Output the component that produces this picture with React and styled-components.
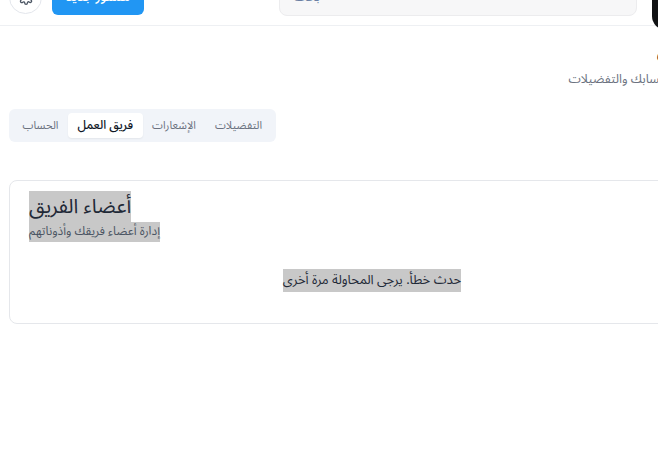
import React from "react";
import styled, { createGlobalStyle } from "styled-components";

const GlobalStyle = createGlobalStyle`
  html, body {
    margin: 0;
    padding: 0;
    background: #ffffff;
    overflow: hidden;
  }
  body {
    font-family: "Noto Sans Arabic", "Noto Sans", sans-serif;
    color: #111827;
  }
  * { box-sizing: border-box; }
`;

const Page = styled.div`
  width: 744px;
  padding: 0 9px;
`;

const Header = styled.header`
  height: 57px;
  margin: -31px -9px 0;
  padding: 0 9px;
  display: flex;
  align-items: center;
  border-bottom: 1px solid #eef0f3;
`;

const HeaderStart = styled.div`
  display: flex;
  align-items: center;
  gap: 10px;
`;

const IconButton = styled.button`
  width: 33px;
  height: 33px;
  border-radius: 50%;
  border: 1px solid #e3e6ec;
  background: #fff;
  display: flex;
  align-items: center;
  justify-content: center;
  padding: 0;
  color: #4b5563;
`;

const PrimaryButton = styled.button`
  width: 92px;
  height: 36px;
  border: none;
  border-radius: 6px;
  background: #2196f3;
  color: #ffffff;
  font-family: "Noto Sans Arabic", sans-serif;
  font-size: 13px;
  font-weight: 500;
`;

const Search = styled.div`
  margin-left: auto;
  width: 358px;
  height: 37px;
  border: 1px solid #ececee;
  border-radius: 8px;
  background: #f7f7f8;
  display: flex;
  align-items: center;
  justify-content: flex-end;
  padding: 0 14px;
  direction: rtl;
  color: #6b7fa3;
  font-size: 13px;
`;

const DarkBadge = styled.div`
  margin-left: 15px;
  width: 83px;
  height: 66px;
  border-radius: 14px;
  background: #111214;
`;

const Main = styled.main`
  padding-top: 16px;
`;

const PageTitle = styled.h1`
  margin: 0;
  font-size: 19px;
  font-weight: 700;
  line-height: 28px;
  text-align: right;
  direction: rtl;
  color: #111827;
`;

const PageSubtitle = styled.p`
  margin: 0;
  font-size: 12.5px;
  line-height: 19px;
  text-align: right;
  direction: rtl;
  color: #6b7280;
`;

const TabList = styled.div`
  margin-top: 20px;
  display: inline-flex;
  align-items: center;
  padding: 4px;
  border-radius: 6px;
  background: #f1f4f9;
`;

const Tab = styled.div`
  height: 25px;
  padding: 0 9.5px;
  display: flex;
  align-items: center;
  border-radius: 4px;
  font-size: ${(p) => (p.$active ? "12px" : "11px")};
  font-weight: ${(p) => (p.$active ? 500 : 400)};
  direction: rtl;
  color: ${(p) => (p.$active ? "#111827" : "#6b7280")};
  background: ${(p) => (p.$active ? "#ffffff" : "transparent")};
  box-shadow: ${(p) => (p.$active ? "0 1px 2px rgba(0,0,0,0.06)" : "none")};
`;

const Card = styled.section`
  margin-top: 38px;
  border: 1px solid #e5e7eb;
  border-radius: 8px;
  padding: 10px 19px 31px;
`;

const Selected = styled.span`
  display: inline-block;
  background: #c8c8c8;
  direction: rtl;
`;

const CardTitle = styled(Selected)`
  font-size: 20px;
  line-height: 32px;
  font-weight: 400;
  color: #1f2937;
`;

const CardSubtitle = styled(Selected)`
  margin-top: -1px;
  font-size: 12px;
  line-height: 20px;
  color: #4b5563;
`;

const Block = styled.div`
  line-height: 0;
`;

const ErrorRow = styled.div`
  margin-top: 27px;
  text-align: center;
  line-height: 0;
`;

const ErrorText = styled(Selected)`
  font-size: 13px;
  line-height: 23px;
  color: #1f2937;
`;

function GearIcon() {
  return (
    <svg width="16" height="16" viewBox="0 0 24 24" fill="none" stroke="currentColor" strokeWidth="2" strokeLinecap="round" strokeLinejoin="round">
      <circle cx="12" cy="12" r="3" />
      <path d="M19.4 15a1.65 1.65 0 0 0 .33 1.82l.06.06a2 2 0 1 1-2.83 2.83l-.06-.06a1.65 1.65 0 0 0-1.82-.33 1.65 1.65 0 0 0-1 1.51V21a2 2 0 1 1-4 0v-.09A1.65 1.65 0 0 0 9 19.4a1.65 1.65 0 0 0-1.82.33l-.06.06a2 2 0 1 1-2.83-2.83l.06-.06A1.65 1.65 0 0 0 4.6 15a1.65 1.65 0 0 0-1.51-1H3a2 2 0 1 1 0-4h.09A1.65 1.65 0 0 0 4.6 9a1.65 1.65 0 0 0-.33-1.82l-.06-.06a2 2 0 1 1 2.83-2.83l.06.06A1.65 1.65 0 0 0 9 4.6a1.65 1.65 0 0 0 1-1.51V3a2 2 0 1 1 4 0v.09a1.65 1.65 0 0 0 1 1.51 1.65 1.65 0 0 0 1.82-.33l.06-.06a2 2 0 1 1 2.83 2.83l-.06.06A1.65 1.65 0 0 0 19.4 9a1.65 1.65 0 0 0 1.51 1H21a2 2 0 1 1 0 4h-.09a1.65 1.65 0 0 0-1.51 1z" />
    </svg>
  );
}

export default function App() {
  const tabs = [
    { label: "الحساب" },
    { label: "فريق العمل", active: true },
    { label: "الإشعارات" },
    { label: "التفضيلات" },
  ];
  return (
    <>
      <GlobalStyle />
      <Page>
        <Header>
          <HeaderStart>
            <IconButton aria-label="الإعدادات">
              <GearIcon />
            </IconButton>
            <PrimaryButton>منشور جديد</PrimaryButton>
          </HeaderStart>
          <Search>بحث</Search>
          <DarkBadge />
        </Header>
        <Main>
          <PageTitle>الإعدادات</PageTitle>
          <PageSubtitle>إدارة إعدادات حسابك والتفضيلات</PageSubtitle>
          <TabList>
            {tabs.map((t) => (
              <Tab key={t.label} $active={t.active}>
                {t.label}
              </Tab>
            ))}
          </TabList>
          <Card>
            <Block>
              <CardTitle>أعضاء الفريق</CardTitle>
            </Block>
            <Block>
              <CardSubtitle>إدارة أعضاء فريقك وأذوناتهم</CardSubtitle>
            </Block>
            <ErrorRow>
              <ErrorText>حدث خطأ. يرجى المحاولة مرة أخرى</ErrorText>
            </ErrorRow>
          </Card>
        </Main>
      </Page>
    </>
  );
}
